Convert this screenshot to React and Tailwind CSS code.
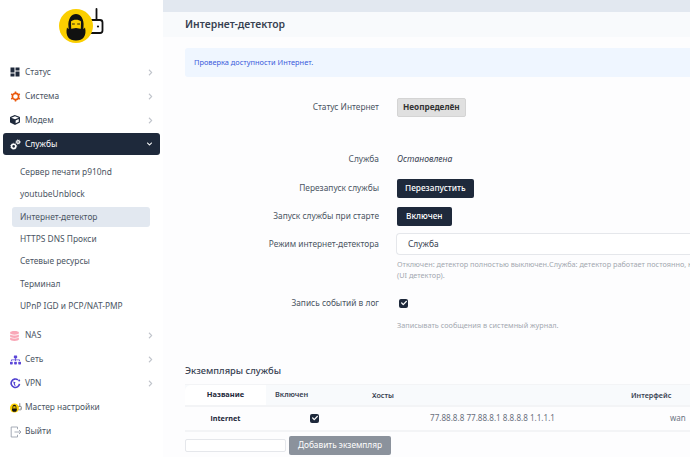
import React from "react";
import { FaCube, FaDatabase, FaSitemap, FaChevronRight, FaChevronDown, FaCheck } from "react-icons/fa";
import { MdDashboard } from "react-icons/md";

function Logo({ className }) {
  return (
    <svg className={className} viewBox="0 0 46 36" fill="none">
      <path d="M37.5 1 V12" stroke="#111" strokeWidth="1.8" strokeLinecap="round" />
      <rect x="30" y="12" width="13.5" height="13" rx="2.5" fill="#fff" stroke="#111" strokeWidth="1.8" />
      <circle cx="39" cy="18.5" r="1.1" fill="#111" />
      <circle cx="17" cy="18" r="17" fill="#fbcf00" />
      <path d="M9.5 19 C7.5 1.5 26.5 1.5 24.5 19 L24 24 L10 24 Z" fill="#111" />
      <path d="M12 13.5 C14 11 20 11 22 13.5 L21.8 21 L12.2 21 Z" fill="#fbcf00" />
      <path d="M8 19.5 C10 22.5 14 20 17 20 C20 20 24 22.5 26 19.5 C28 28 24 32.5 17 32.5 C10 32.5 6 28 8 19.5 Z" fill="#111" />
      <path d="M13 16 h2.8 M18.2 16 h2.8" stroke="#111" strokeWidth="0.9" />
    </svg>
  );
}

function Gears() {
  return (
    <svg className="w-[11px] h-[11px]" viewBox="0 0 12 12" fill="none" stroke="#fff">
      <circle cx="4" cy="8" r="2.3" strokeWidth="1.7" />
      <circle cx="4" cy="8" r="3.3" strokeWidth="0.8" strokeDasharray="1 1.1" />
      <circle cx="8.8" cy="3.2" r="1.5" strokeWidth="1.4" />
      <circle cx="8.8" cy="3.2" r="2.5" strokeWidth="0.7" strokeDasharray="0.9 1" />
    </svg>
  );
}

function OrangeGear() {
  return (
    <svg className="w-[11px] h-[11px]" viewBox="0 0 12 12" fill="none" stroke="#ea580c">
      <circle cx="6" cy="6" r="3.4" strokeWidth="1.8" />
      <path d="M6 .6 V2.4 M6 9.6 V11.4 M1.3 3.3 L2.9 4.2 M9.1 7.8 L10.7 8.7 M1.3 8.7 L2.9 7.8 M9.1 4.2 L10.7 3.3" strokeWidth="1.7" />
    </svg>
  );
}

function VpnIcon() {
  return (
    <svg className="w-[11px] h-[11px]" viewBox="0 0 12 12" fill="none">
      <path d="M8.6 2 A4.6 4.6 0 1 0 10.4 6.5" stroke="#5040d0" strokeWidth="1.8" />
      <circle cx="10" cy="2.6" r="1.1" fill="#5040d0" />
      <path d="M3.5 3.8 L6 4.6 L5.2 6.6 L6.4 8.4 L4.6 8.2 Z" fill="#5040d0" />
    </svg>
  );
}

function LogoutIcon() {
  return (
    <svg className="w-[12px] h-[12px]" viewBox="0 0 12 12" fill="none" stroke="#9ca3af" strokeWidth="0.9">
      <path d="M7.5 3.2 V1 H1.2 V11 H7.5 V8.8" />
      <path d="M4.5 6 H11 M9 4 L11 6 L9 8" />
    </svg>
  );
}

function TopItem({ icon, label, open, active }) {
  return (
    <div className={active
      ? "mx-[3px] h-[22px] my-[1px] rounded-[3px] bg-[#1e293b] text-white flex items-center px-[7px] text-[8.4px]"
      : "mx-[3px] h-[24px] text-[#4b5563] flex items-center px-[7px] text-[8.4px]"}>
      <span className="w-[15px] h-[12px] flex items-center justify-start shrink-0">{icon}</span>
      <span className="flex-1">{label}</span>
      {open === true && <FaChevronDown className="text-white w-[7px] h-[6px]" />}
      {open === false && <FaChevronRight className="text-[#c0c4cb] w-[5px] h-[7px]" />}
    </div>
  );
}

function SubItem({ label, active }) {
  return (
    <div className={active
      ? "ml-[12px] mr-[13px] h-[20px] my-[1.2px] rounded-[3px] bg-[#e2e8f0] text-[#4b5563] flex items-center pl-[8px] text-[8.4px]"
      : "mx-[12px] h-[22.4px] text-[#4b5563] flex items-center pl-[8px] text-[8.4px]"}>
      {label}
    </div>
  );
}

function Check() {
  return (
    <span className="w-[9px] h-[9px] rounded-[2px] bg-[#1e293b] flex items-center justify-center">
      <FaCheck className="text-white w-[6px] h-[6px]" />
    </span>
  );
}

function Row({ label, className, children }) {
  return (
    <div className={"flex items-center " + className}>
      <div className="w-[216px] pr-[18px] text-right text-[8.35px] text-[#4b5563] shrink-0 whitespace-nowrap">{label}</div>
      <div className="flex-1 min-w-0 flex items-center">{children}</div>
    </div>
  );
}

export default function App() {
  return (
    <div className="w-[690px] h-[457px] overflow-hidden flex bg-white" style={{ fontFamily: '"Noto Sans", sans-serif' }}>
      <aside className="w-[163px] shrink-0 bg-white flex flex-col pt-[7px]">
        <div className="h-[53px] flex justify-start pl-[59px] pt-[1px]">
          <Logo className="w-[46px] h-[36px]" />
        </div>
        <TopItem label="Статус" open={false} icon={<MdDashboard className="w-[12px] h-[12px] text-[#1e293b] -ml-[1px]" />} />
        <TopItem label="Система" open={false} icon={<OrangeGear />} />
        <TopItem label="Модем" open={false} icon={<FaCube className="w-[10px] h-[10px] text-[#1e293b]" />} />
        <TopItem label="Службы" open={true} active icon={<Gears />} />
        <div className="h-[5px]" />
        <SubItem label="Сервер печати p910nd" />
        <SubItem label="youtubeUnblock" />
        <SubItem label="Интернет-детектор" active />
        <SubItem label="HTTPS DNS Прокси" />
        <SubItem label="Сетевые ресурсы" />
        <SubItem label="Терминал" />
        <SubItem label="UPnP IGD и PCP/NAT-PMP" />
        <div className="h-[6px]" />
        <TopItem label="NAS" open={false} icon={<FaDatabase className="w-[9px] h-[10px] text-[#f9a8b8]" />} />
        <TopItem label="Сеть" open={false} icon={<FaSitemap className="w-[11px] h-[10px] text-[#5b46d8]" />} />
        <TopItem label="VPN" open={false} icon={<VpnIcon />} />
        <TopItem label="Мастер настройки" icon={<Logo className="w-[12px] h-[10px]" />} />
        <TopItem label="Выйти" icon={<LogoutIcon />} />
      </aside>

      <main className="flex-1 min-w-0 flex flex-col bg-[#fdfdfe]">
        <div className="h-[12px] bg-[#e2e8f0] shrink-0" />
        <div className="h-[25px] bg-[#f8fafc] shrink-0 flex items-center pl-[22px] text-[10.4px] font-semibold text-[#374151]">Интернет-детектор</div>
        <div className="pl-[22px] pt-[11px]">
          <div className="h-[29px] bg-[#eff6ff] rounded-l-[3px] flex items-center pl-[9px] text-[7.4px] text-[#3b5bdb]">Проверка доступности Интернет.</div>
        </div>
        <div className="pl-[18px]">
          <Row label="Статус Интернет" className="mt-[20px] h-[20px]">
            <span className="inline-flex items-center h-[19px] px-[5px] bg-[#e0e0e0] border border-[#d4d4d4] rounded-[2px] text-[8.2px] font-bold text-[#333]">Неопределён</span>
          </Row>
          <Row label="Служба" className="mt-[32px] h-[20px]">
            <span className="text-[8.6px] italic text-[#374151]">Остановлена</span>
          </Row>
          <Row label="Перезапуск службы" className="mt-[9px] h-[20px]">
            <span className="inline-flex items-center h-[19px] px-[8px] bg-[#1e293b] rounded-[2px] text-[8.3px] font-medium text-white">Перезапустить</span>
          </Row>
          <Row label="Запуск службы при старте" className="mt-[8px] h-[20px]">
            <span className="inline-flex items-center h-[19px] px-[9px] bg-[#1e293b] rounded-[2px] text-[8.3px] font-medium text-white">Включен</span>
          </Row>
          <Row label="Режим интернет-детектора" className="mt-[7px] h-[22px]">
            <div className="h-[22px] flex-1 -ml-[1px] bg-white border border-[#e5e7eb] border-r-0 rounded-l-[4px] flex items-center pl-[11px] text-[8.4px] text-[#374151]">Служба</div>
          </Row>
          <div className="pl-[216px] mt-[4px] text-[7.3px] leading-[11px] text-[#a3a8b0] overflow-hidden">
            <div className="whitespace-nowrap">Отключен: детектор полностью выключен.Служба: детектор работает постоянно, к</div>
            <div>(UI детектор).</div>
          </div>
          <Row label="Запись событий в лог" className="mt-[12px] h-[20px]">
            <span className="block ml-[2px]"><Check /></span>
          </Row>
          <div className="pl-[216px] mt-[7px] text-[7.3px] leading-[11px] text-[#a3a8b0]">Записывать сообщения в системный журнал.</div>
        </div>
        <div className="pl-[22px] mt-[33px] text-[9.3px] font-medium text-[#374151]">Экземпляры службы</div>
        <div className="ml-[22px] mt-[6px] border-b-2 border-[#f3f4f6]">
          <div className="grid grid-cols-[81px_106px_259px_59px] h-[21px] items-center bg-[#f8fafc] border-t border-[#f3f4f6] text-[7.2px] font-semibold text-[#374151]">
            <div className="h-full bg-white rounded-tl-[6px] flex items-center justify-center text-[7.5px] font-bold text-[#1e293b]">Название</div>
            <div className="pl-[9px] text-[7.4px]">Включен</div>
            <div>Хосты</div>
            <div>Интерфейс</div>
          </div>
          <div className="grid grid-cols-[81px_106px_259px_59px] h-[25px] items-center border-t-2 border-[#f3f4f6] text-[8px] text-[#6b7280]">
            <div className="text-center text-[7.3px] font-bold text-[#1e293b]">internet</div>
            <div className="pl-[44px]"><Check /></div>
            <div className="pl-[58px] text-[8.1px] whitespace-nowrap">77.88.8.8 77.88.8.1 8.8.8.8 1.1.1.1</div>
            <div className="pl-[39px]">wan</div>
          </div>
        </div>
        <div className="ml-[22px] mt-[4px] flex items-center gap-[3px]">
          <div className="w-[101px] h-[13px] bg-white border border-[#e5e7eb] rounded-[2px]" />
          <span className="inline-flex items-center justify-center w-[102px] h-[19px] bg-[#8b929c] rounded-[2px] text-[8.3px] text-white">Добавить экземпляр</span>
        </div>
      </main>
    </div>
  );
}
